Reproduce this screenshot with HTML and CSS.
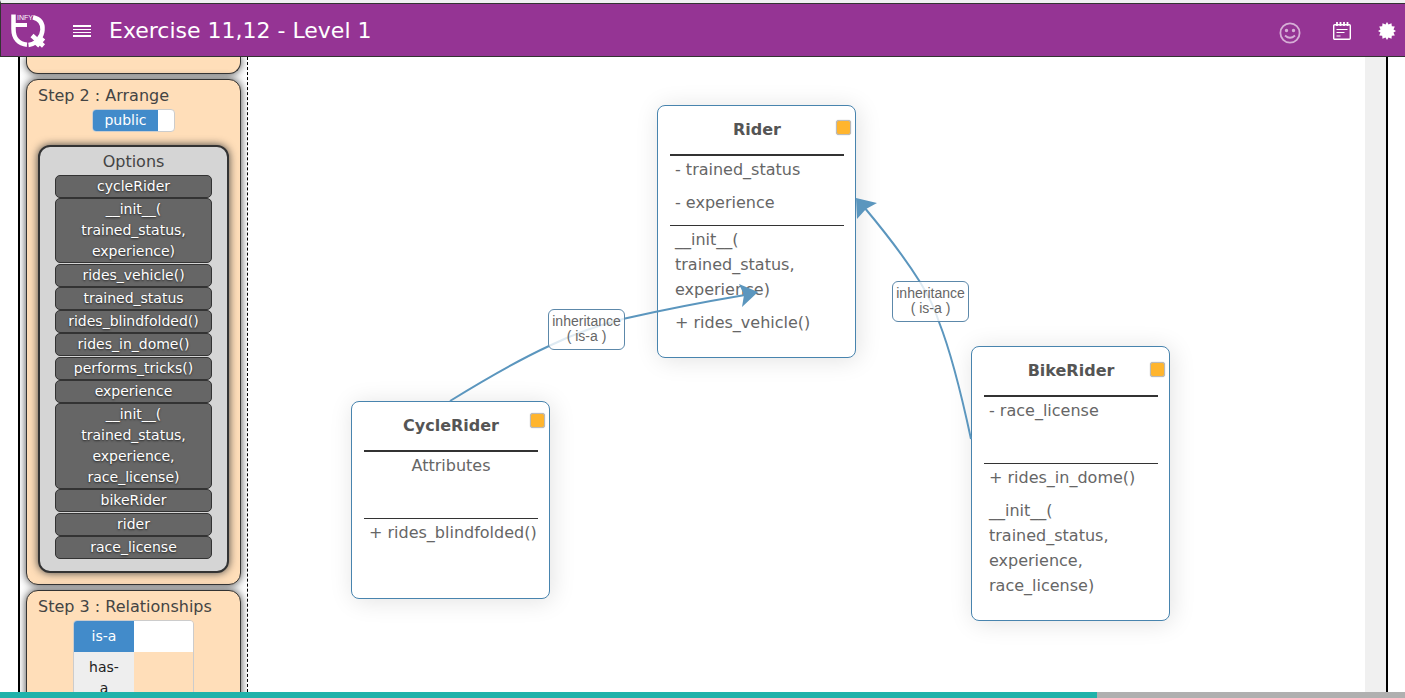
FILE: index.html
```html
<!DOCTYPE html>
<html lang="en">
<head>
<meta charset="utf-8">
<title>Exercise 11,12 - Level 1</title>
<link rel="stylesheet" href="styles.css">
</head>
<body>
<header class="topbar">
  <svg class="logo" viewBox="0 0 36 36" role="img" aria-label="Infytq">
    <g fill="none" stroke="#fff">
      <path d="M3.500 1.500V16C3.500 26 9 31 17 31.800" stroke-width="4.500"/>
      <path d="M3 12H17" stroke-width="4"/>
      <path d="M23 4.200C30 6 33 11 32.500 17C32.200 21 31 23.500 28.500 26" stroke-width="4.500"/>
      <path d="M18.500 32Q22.500 31.500 26 29M22 22.500L33.500 33M33.500 25L26.500 33" stroke-width="4.500"/>
    </g>
    <text class="logo-text" x="7" y="7">INFY</text>
  </svg>
  <button class="icon-button menu" aria-label="Menu">
    <svg width="18" height="12" viewBox="0 0 18 12" fill="#fff"><path d="M0 0h18v2H0zM0 4h18v1H0zM0 7h18v1H0zM0 10h18v2H0z"/></svg>
  </button>
  <h1 class="title">Exercise 11,12 - Level 1</h1>
  <nav class="actions" aria-label="Tools">
    <button class="icon-button feedback" aria-label="Feedback">
      <svg width="22" height="22" viewBox="0 0 22 22" fill="none" stroke="#d6aed6" stroke-width="1.800"><circle cx="11" cy="11" r="9.600"/><path d="M6 13.500Q11 18 16 13.500"/><circle cx="7.500" cy="8.500" r=".8" fill="#d6aed6"/><circle cx="14.500" cy="8.500" r=".8" fill="#d6aed6"/></svg>
    </button>
    <button class="icon-button" aria-label="Notes">
      <svg width="18" height="18" viewBox="0 0 18 18" fill="none" stroke="#fff"><rect x=".7" y="2.700" width="16.600" height="14.600" rx="1" stroke-width="1.400"/><path d="M4 0v4M7.500 0v4M11 0v4M14.500 0v4" stroke-width="1.800"/><path d="M3.500 7.500h11M3.500 10.500h8M3.500 14h4" stroke-width="1.200"/></svg>
    </button>
    <button class="icon-button" aria-label="Settings">
      <svg width="18" height="18" viewBox="0 0 18 18" fill="#fff"><path d="M9 0l1.500 2.500L13.500 1.200l.3 3 3 .3-1.300 3L18 9l-2.500 1.500 1.300 3-3 .3-.3 3-3-1.300L9 18l-1.500-2.500-3 1.300-.3-3-3-.3 1.300-3L0 9l2.500-1.500-1.300-3 3-.3.3-3 3 1.300z"/></svg>
    </button>
  </nav>
</header>
<main class="workspace">
  <aside class="sidebar">
    <section class="step step-previous" aria-label="Step 1"></section>
    <section class="step">
      <h2 class="step-title">Step 2 : Arrange</h2>
      <div class="access">
        <button class="toggle toggle-small" aria-pressed="true">public</button>
      </div>
      <div class="options">
        <h3 class="options-title">Options</h3>
        <div class="chips">
          <button class="chip">cycleRider</button>
          <button class="chip">__init__(<br>trained_status,<br>experience)</button>
          <button class="chip">rides_vehicle()</button>
          <button class="chip">trained_status</button>
          <button class="chip">rides_blindfolded()</button>
          <button class="chip">rides_in_dome()</button>
          <button class="chip">performs_tricks()</button>
          <button class="chip">experience</button>
          <button class="chip">__init__(<br>trained_status,<br>experience,<br>race_license)</button>
          <button class="chip">bikeRider</button>
          <button class="chip">rider</button>
          <button class="chip">race_license</button>
        </div>
      </div>
    </section>
    <section class="step">
      <h2 class="step-title">Step 3 : Relationships</h2>
      <div class="relations">
        <div class="relation-row selected"><button class="toggle" aria-pressed="true">is-a</button></div>
        <div class="relation-row"><button class="toggle" aria-pressed="false">has-<br>a</button></div>
      </div>
    </section>
  </aside>
  <section class="canvas" aria-label="Class diagram">
    <article class="node node-rider">
      <h2 class="node-title">Rider</h2>
      <button class="handle" aria-label="Connect Rider"></button>
      <div class="members"><p>- trained_status</p><p>- experience</p></div>
      <div class="members methods"><p>__init__(<br>trained_status,<br>experience)</p><p>+ rides_vehicle()</p></div>
    </article>
    <article class="node node-cycle">
      <h2 class="node-title">CycleRider</h2>
      <button class="handle" aria-label="Connect CycleRider"></button>
      <div class="members"><p class="placeholder">Attributes</p></div>
      <div class="members methods"><p>+ rides_blindfolded()</p></div>
    </article>
    <article class="node node-bike">
      <h2 class="node-title">BikeRider</h2>
      <button class="handle" aria-label="Connect BikeRider"></button>
      <div class="members"><p>- race_license</p></div>
      <div class="members methods"><p>+ rides_in_dome()</p><p>__init__(<br>trained_status,<br>experience,<br>race_license)</p></div>
    </article>
    <svg class="links" aria-hidden="true">
      <g transform="translate(-248 -57)">
        <path class="link" d="M450 401Q510 364 549 346Q586 328 625 318.500Q680 306 745 295"/>
        <path class="link-head" d="M758 292L739 284L744 295L742 307Z"/>
        <path class="link" d="M971 439Q954 360 939 322Q933 303 920 282Q900 250 864 207"/>
        <path class="link-head" d="M856 198L877 203L866 209L857 219Z"/>
      </g>
    </svg>
    <div class="link-label label-cycle">inheritance<br>( is-a )</div>
    <div class="link-label label-bike">inheritance<br>( is-a )</div>
  </section>
  <div class="gutter"></div>
</main>
<div class="progress" role="progressbar" aria-label="Progress" aria-valuenow="78" aria-valuemin="0" aria-valuemax="100"><div class="progress-fill" style="width:78.1%"></div></div>
</body>
</html>
```
FILE: styles.css
```css
* { box-sizing: border-box; }

body {
  margin: 0;
  height: 100vh;
  display: flex;
  flex-direction: column;
  overflow: hidden;
  background: #fff;
  color: #444;
  font: 16px/25px "DejaVu Sans", Verdana, sans-serif;
}

h1, h2, h3, p { margin: 0; font-weight: normal; }
button { font: inherit; color: inherit; cursor: pointer; }

.topbar {
  flex: none;
  height: 57px;
  display: flex;
  align-items: center;
  padding: 2px 9px 0 9px;
  border: 1px solid #333;
  border-right: 0;
  border-top: 3px solid #f0f0f2;
  background: #953494;
  box-shadow: inset 0 1px #333;
}
.logo { width: 36px; height: 36px; margin-right: 27px; }
.logo-text { font: 7px "Liberation Sans", sans-serif; fill: #fff; }
.icon-button { display: flex; padding: 0; border: 0; background: none; }
.menu { margin-right: 18px; }
.title { font-size: 22px; color: #fff; }
.actions { display: flex; align-items: center; gap: 32px; margin-left: auto; }
.actions .icon-button:last-child { margin-left: -5px; }
.feedback { padding-top: 4px; }

.workspace {
  flex: 1;
  min-height: 0;
  display: flex;
  margin: 0 17px 0 18px;
  border: solid #000;
  border-width: 0 2px;
}

.sidebar {
  flex: none;
  width: 228px;
  padding: 0 6px;
  display: flex;
  flex-direction: column;
  gap: 5px;
  overflow: hidden;
  border-right: 1px dashed #000;
}
.step {
  flex: none;
  padding: 3px 11px 11px;
  border: 1px solid #333;
  border-radius: 12px;
  background: #ffdeb9;
  box-shadow: 0 0 8px #444;
}
.step-previous { height: 17px; border-top: 0; border-radius: 0 0 12px 12px; }
.step-title { font-size: 16px; white-space: nowrap; }

.toggle {
  display: block;
  width: 60px;
  padding: 5px 8px;
  border: 0;
  background: #eee;
  color: #222;
  font-size: 14px;
  line-height: 21px;
}
.toggle[aria-pressed="true"] { background: #428bca; color: #fff; }
.access {
  width: 83px;
  margin: 1px 0 13px 54px;
  overflow: hidden;
  border: 1px solid #ccc;
  border-radius: 4px;
  background: #fff;
}
.toggle-small { width: 65px; padding: 0; }
.relations {
  width: 121px;
  margin: 1px auto 0;
  overflow: hidden;
  border: 1px solid #ccc;
  border-radius: 4px;
}
.relation-row.selected { background: #fff; }

.options {
  padding: 2px 15px 12px;
  border: 2px solid #333;
  border-radius: 12px;
  background: #d5d5d5;
  box-shadow: 0 0 8px #444;
}
.options-title { font-size: 16px; text-align: center; margin-bottom: 1px; }
.chips {
  display: flex;
  flex-direction: column;
  justify-content: space-between;
  min-height: 384px;
}
.chip {
  display: block;
  padding: 0;
  border: 1px solid #333;
  border-radius: 5px;
  background: #666;
  color: #fff;
  font-size: 14px;
  line-height: 21px;
  text-shadow: 0 1px 2px #222;
}

.canvas { position: relative; flex: 1; overflow: hidden; }
.gutter { flex: none; width: 21px; background: #f0f0f0; }

.node {
  position: absolute;
  width: 199px;
  padding: 0 11px 14px 12px;
  border: 1px solid #4884ae;
  border-radius: 8px;
  background: #fff;
  color: #666;
  box-shadow: 2px 2px 24px #e2e2e2;
}
.node-rider { left: 409px; top: 48px; }
.node-cycle { left: 103px; top: 344px; }
.node-bike { left: 723px; top: 289px; }
.node-title {
  font-size: 16px;
  font-weight: bold;
  line-height: 48px;
  text-align: center;
  color: #555;
}
.handle {
  position: absolute;
  top: 14px;
  right: 4px;
  width: 15px;
  height: 15px;
  padding: 0;
  border: 1px solid #bbb;
  border-radius: 3px;
  background: #ffb52e;
  box-shadow: 0 0 1px #999;
}
.node-cycle .handle { top: 11px; }
.node-bike .handle { top: 15px; }
.members {
  min-height: 68px;
  padding: 1px 0 2px 5px;
  border-top: 2px solid #333;
  white-space: nowrap;
}
.members p { margin-bottom: 8px; }
.methods { min-height: 66px; padding-bottom: 0; border-top-width: 1px; }
.placeholder { padding-right: 5px; text-align: center; }

.links { position: absolute; inset: 0; width: 100%; height: 100%; pointer-events: none; }
.link { fill: none; stroke: #5b96be; stroke-width: 2; }
.link-head { fill: #5b96be; }
.link-label {
  position: absolute;
  width: 77px;
  padding: 4px 0 5px;
  border: 1px solid #5c88aa;
  border-radius: 6px;
  background: rgba(255, 255, 255, 0.8);
  color: #666;
  font: 14px/15px "Liberation Sans", Arial, sans-serif;
  text-align: center;
}
.label-cycle { left: 300px; top: 252px; }
.label-bike { left: 644px; top: 224px; }

.progress { flex: none; height: 6px; background: #b0b0b0; }
.progress-fill { height: 100%; background: #20b2aa; }
```
